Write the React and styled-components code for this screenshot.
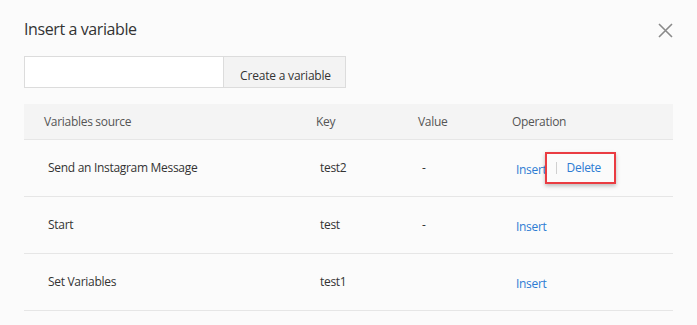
import styled, { createGlobalStyle } from "styled-components";

const GlobalStyle = createGlobalStyle`
    html, body {
        margin: 0;
        padding: 0;
        background: #fbfbfb;
    }
    body {
        font-family: "Open Sans", "Liberation Sans", sans-serif;
        color: #333;
    }
`

const rows = [
    { source: "Send an Instagram Message", key: "test2", value: "-", canDelete: true },
    { source: "Start", key: "test", value: "-", canDelete: false },
    { source: "Set Variables", key: "test1", value: "", canDelete: false },
];

export default function App() {
    return (
        <>
            <GlobalStyle />
            <Dialog>
                <Header>
                    <Title>Insert a variable</Title>
                    <CloseButton aria-label="close">
                        <svg width="15" height="15" viewBox="0 0 15 15">
                            <path d="M1 1 L14 14 M14 1 L1 14" stroke="#8a8a8a" strokeWidth="1.6" fill="none" />
                        </svg>
                    </CloseButton>
                </Header>

                <CreateBar>
                    <NameInput />
                    <CreateButton>Create a variable</CreateButton>
                </CreateBar>

                <Table>
                    <HeadRow>
                        <HeadCell>Variables source</HeadCell>
                        <HeadCell>Key</HeadCell>
                        <HeadCell>Value</HeadCell>
                        <HeadCell>Operation</HeadCell>
                    </HeadRow>
                    {rows.map((row) => (
                        <BodyRow key={row.source}>
                            <Cell>{row.source}</Cell>
                            <Cell>{row.key}</Cell>
                            <Cell>{row.value}</Cell>
                            <OpCell>
                                <LinkButton>Insert</LinkButton>
                                {row.canDelete && (
                                    <Highlight>
                                        <Divider />
                                        <LinkButton>Delete</LinkButton>
                                    </Highlight>
                                )}
                            </OpCell>
                        </BodyRow>
                    ))}
                </Table>
            </Dialog>
        </>
    )
}

const Dialog = styled.div`
    width: 697px;
    height: 325px;
    box-sizing: border-box;
    padding: 17px 24px 0 24px;
`
const Header = styled.div`
    display: flex;
    align-items: center;
    justify-content: space-between;
    height: 24px;
`
const Title = styled.div`
    font-size: 16px;
    color: #333;
    letter-spacing: -0.4px;
`
const CloseButton = styled.div`
    display: flex;
    margin-top: 2px;
`
const CreateBar = styled.div`
    display: flex;
    margin-top: 15px;
    height: 32px;
`
const NameInput = styled.input`
    width: 200px;
    box-sizing: border-box;
    border: 1px solid #dcdcdc;
    background: #fff;
    outline: none;
    margin: 0;
`
const CreateButton = styled.button`
    width: 122px;
    box-sizing: border-box;
    border: 1px solid #dcdcdc;
    border-left: none;
    background: #f3f3f3;
    font-family: "Open Sans", "Liberation Sans", sans-serif;
    font-size: 12px;
    letter-spacing: -0.2px;
    color: #333;
    padding: 6px 0 0 2px;
    margin: 0;
`
const Table = styled.div`
    margin-top: 16px;
    width: 649px;
`
const columns = "272px 102px 94px 1fr";

const HeadRow = styled.div`
    display: grid;
    grid-template-columns: ${columns};
    height: 35px;
    align-items: center;
    background: #f4f4f4;
    border-bottom: 1px solid #e6e6e6;
    padding-left: 20px;
    font-size: 12px;
    letter-spacing: -0.3px;
    color: #555;
`
const HeadCell = styled.div``

const BodyRow = styled.div`
    display: grid;
    grid-template-columns: ${columns};
    height: 56px;
    align-items: center;
    border-bottom: 1px solid #e6e6e6;
    padding-left: 24px;
    font-size: 12px;
    letter-spacing: -0.3px;
    color: #333;
`
const Cell = styled.div`
    margin-top: -1px;
`
const OpCell = styled.div`
    display: flex;
    align-items: center;
    padding-top: 3px;
`
const LinkButton = styled.span`
    color: #2d7bd3;
    font-size: 12px;
`
const Highlight = styled.div`
    display: flex;
    align-items: center;
    gap: 10px;
    height: 28px;
    margin-left: -2px;
    margin-top: -4px;
    padding: 0 13px 0 1px;
    border: 2px solid #ea3c42;
    box-shadow: 0 2px 4px rgba(0, 0, 0, 0.25);
`
const Divider = styled.span`
    width: 1px;
    height: 12px;
    background: #d0d0d0;
    margin-left: 8px;
`
